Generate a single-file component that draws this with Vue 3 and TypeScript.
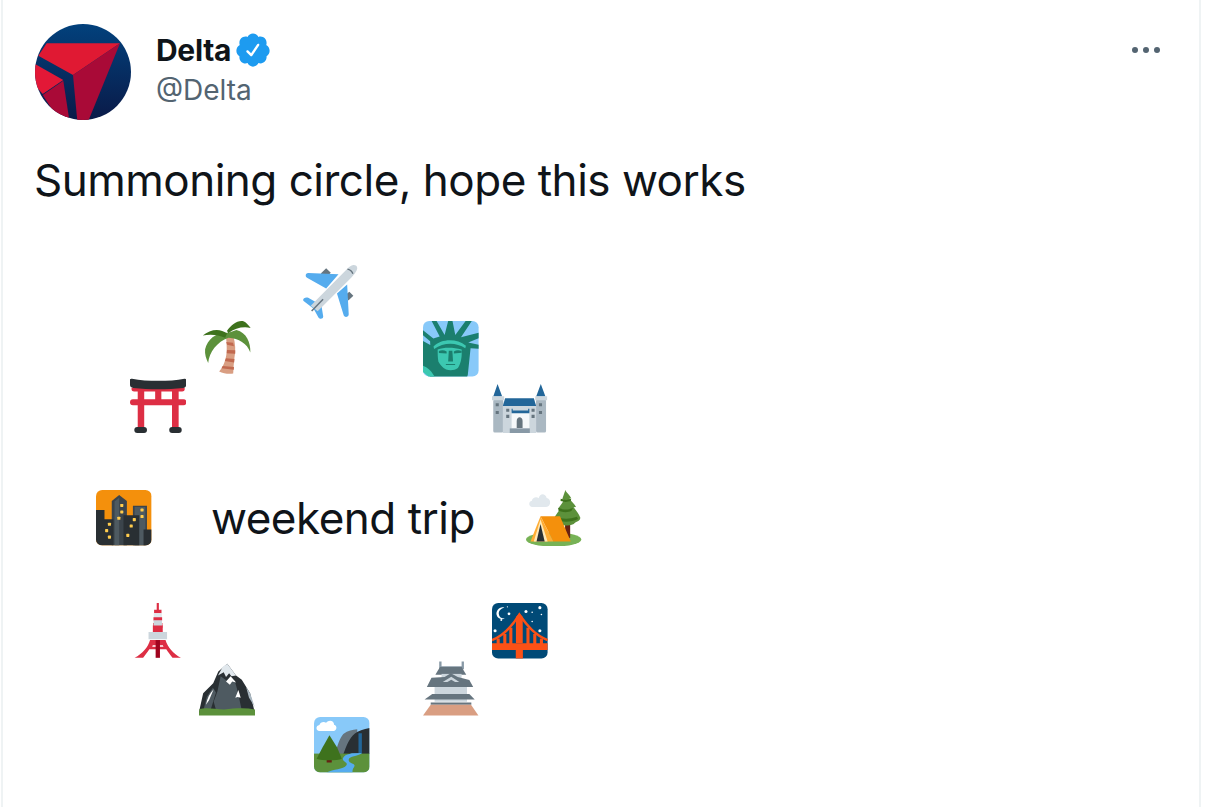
<script setup lang="ts">
const name: string = 'Delta'
const handle: string = '@Delta'
const windows: [number, number][] = [[16.7,10],[16.7,14.2],[14.8,18.3],[8.7,22.2],[6.9,26.3],[8.7,30.5],[24.8,19.2],[22.8,23.3],[20.6,29.4],[29.8,13],[29.8,17.2]]
const stars: [number, number, number][] = [[10,1.5,.4],[11,6,.9],[6,10,.6],[22,4.5,1],[26,5,.5],[31,2,1],[32,6.5,.5],[26,11,.5],[2,17,1],[31,17,1]]
</script>

<template>
  <main class="card">
    <header class="head">
      <svg class="avatar" viewBox="0 0 96 96">
        <defs>
          <linearGradient id="navy" x1="0" y1="0" x2="0" y2="1">
            <stop offset="0" stop-color="#02417c" />
            <stop offset="1" stop-color="#0a1a48" />
          </linearGradient>
          <clipPath id="round"><circle cx="48" cy="48" r="48" /></clipPath>
        </defs>
        <circle cx="48" cy="48" r="48" fill="url(#navy)" />
        <g clip-path="url(#round)">
          <polygon fill="#e01933" points="11.7,19.3 85,19.3 38,51 3.3,31.7" />
          <polygon fill="#a90a37" points="85,19.3 38,51 42.3,97 53.3,97" />
          <polygon fill="#e31837" points="-1,39.500 28.3,56 7.7,70 -1,60" />
          <polygon fill="#a90a37" points="28.3,56.7 34.300,96 24,96 7.7,71" />
        </g>
      </svg>
      <div class="who">
        <div class="name-row">
          <span class="name">{{ name }}</span>
          <svg class="badge" viewBox="0 0 24 24"><path fill="#1d9bf0" d="M22.5 12.5c0-1.58-.875-2.95-2.148-3.6.154-.435.238-.905.238-1.4 0-2.21-1.71-3.998-3.818-3.998-.47 0-.92.084-1.336.25C14.818 2.415 13.51 1.5 12 1.5s-2.816.917-3.437 2.25c-.415-.165-.866-.25-1.336-.25-2.11 0-3.818 1.79-3.818 4 0 .494.083.964.237 1.4-1.272.65-2.147 2.018-2.147 3.6 0 1.495.782 2.798 1.942 3.486-.02.17-.032.34-.032.514 0 2.21 1.708 4 3.818 4 .47 0 .92-.086 1.335-.25.62 1.334 1.926 2.25 3.437 2.25 1.512 0 2.818-.916 3.437-2.25.415.163.865.248 1.336.248 2.11 0 3.818-1.79 3.818-4 0-.174-.012-.344-.033-.513 1.158-.687 1.943-1.99 1.943-3.484zm-6.616-3.334l-4.334 6.5c-.145.217-.382.334-.625.334-.143 0-.288-.04-.416-.126l-.115-.094-2.415-2.415c-.293-.293-.293-.768 0-1.06s.768-.294 1.06 0l1.77 1.767 3.825-5.74c.23-.345.696-.436 1.04-.207.346.23.44.696.21 1.04z" /></svg>
        </div>
        <div class="handle">{{ handle }}</div>
      </div>
      <div class="more"><i></i><i></i><i></i></div>
    </header>

    <p class="tweet">Summoning circle, hope this works</p>

    <section class="stage">
      <!-- airplane -->
      <svg class="e plane" viewBox="0 0 36 36">
        <path fill="#66757f" d="M15 2.8l3 2.8-3 3-3.5-2.5zM30 18l2.6 2.6-3.2 3-2-3.5z" />
        <path fill="#55acee" d="M23 6.7L3.4 5.900C1.600 5.900 1.200 8 2.600 8.900L15 15.800zM28.600 13.200l1 19.200c.1 1.900-2.400 2.600-3.200 1L22 19.100zM11.900 26.700L3.400 21.800C1 21-.8 23 .6 24.200l6.300 4.700L10 34.600c1 1.500 3.600 1 3-1.200z" />
        <path fill="#ccd6dd" d="M32.500.6c2.400-.3 3.200 1.800 2.200 3.600-.8 1.500-1.900 3-3.200 4.300L9.500 30.600 5 27 27.600 4.200c1.500-1.500 3-3.300 4.900-3.600z" />
        <path fill="none" stroke="#66757f" stroke-width="1" d="M5.600 30.400L13 22.800" />
        <path fill="none" stroke="#66757f" stroke-width=".9" d="M28.800 3.300c1.700.4 3 1.500 3.500 3" />
      </svg>

      <!-- palm -->
      <svg class="e palm" viewBox="0 0 36 36">
        <path fill="#d99e82" d="M16.800 10h4.600c1.600 5 1.800 10 .9 14.500-.4 3.500-.7 6.700-.8 10.200-3 .4-6.500 0-9.100-1.400 2.500-2.800 4.300-7 4.800-12 .3-4-.1-8-.4-11.300z" />
        <path fill="#c1694f" d="M17 14.200l4.400.5.6 2.300-4.500-1zM17.500 19.400l5.300.2v2.200l-5.500-.2zM16.800 24.700l5.500.6-.2 2.200-6-1zM14.700 29.800l7.300.7-.1 1.700-8-1z" />
        <path fill="#5c913b" d="M18.500 8.300C11 7.500 5 12 3.300 19c-.3 3 .6 6 2 8.800C6 21 11 14 18.500 11.500 25 12 30.500 15 32.600 21c.3-6.500-2.500-13-9-14.600z" />
        <path fill="#3e721d" d="M17.500 8.800C13 5 6.500 6 1.800 10c5-.9 10-.5 14.500 1.500zM17.500 7C20 3 25-.5 28.500.9c1.500.7 3 2.500 4.300 4.200-5-1-10 0-14.500 3.500z" />
      </svg>

      <!-- statue of liberty -->
      <svg class="e statue" viewBox="0 0 36 36">
        <rect width="36" height="36" rx="4" fill="#88c9f9" />
        <path fill="#1b7f6e" d="M5.600 0h3.200l5.200 9L16.300 0h2.800l1.800 9L27.600 0h4l-7 10.600 11.400-3v3.600l-6.700 2.700 6.700 1.400v2.700l-5.200-.3-1.800 17.200-.4 1H4.500L0 29V13l4.700 2.500-.1-2.400L0 9.300V6l6.700 5.300 4.100-1.300z" />
        <path fill="#3cc8b1" d="M9.500 18.500c4-1.500 10-1.500 15.500 0 .3 4-.1 8.500-2.400 12-2.200 1.600-5.200 1.800-7.600.9-2.500-1.200-3.800-3-5-5-.5-2.500-.5-5.300-.5-7.900zM0 29c3 1 5 3 6.500 5.500l1 1.500H3.500L0 33z" />
        <path fill="#3cc8b1" d="M6.800 16.500c5.200-5.200 15-5.300 21-.5l-.4 1.700c-6-4-14-3.900-20.200.4z" />
        <path fill="#1b7f6e" d="M10.300 19.400c1.700-.6 3.400-.6 5 .4v1.200l-5-.2zM20 19.800c1.500-1 3.200-1 5-.4v1.200l-5 .4zM16.300 26.300h3.100v-1.100l-.4-6h-2.300zM14.800 27.800h6v.7h-6z" />
      </svg>

      <!-- torii -->
      <svg class="e torii" viewBox="0 0 36 36">
        <path fill="#dd2e44" d="M1 7h34.400v1.100c0 .8-.8 1.300-1.600 1.300H2.600c-.8 0-1.600-.5-1.600-1.300z" />
        <path fill="#dd2e44" d="M5 8h4.200v25H5zM27.200 8h4.300v25h-4.300zM16.300 9h4v6h-4z" />
        <rect x="0" y="14.400" width="36.500" height="3.900" rx="1.900" fill="#dd2e44" />
        <path fill="#292f33" d="M0 1.500C.3 1.100.9 1 1.300 1.200c5 1.100 11 1.300 17 1.300s12-.2 17-1.300c.4-.2.800 0 1 .4v3.600c0 1.100-.8 1.700-1.800 1.900-5 .6-11 .9-16.200.9-5.500 0-11-.3-16.200-.9C1 6.900 0 6.300 0 5.200z" />
        <rect x="2.800" y="32.400" width="8.200" height="3.800" rx="1.900" fill="#292f33" />
        <rect x="25.400" y="32.400" width="8.100" height="3.800" rx="1.900" fill="#292f33" />
      </svg>

      <!-- european castle -->
      <svg class="e castle" viewBox="0 0 36 36">
        <path fill="#226699" d="M3.600 4.500l3 8.200H.8zM31.600 4.500l3 8.200h-6z" />
        <rect x=".8" y="14.500" width="6.500" height="21.500" rx="1" fill="#aab8c2" />
        <rect x="28.500" y="14.500" width="6.500" height="21.500" rx="1" fill="#aab8c2" />
        <path fill="#ccd6dd" d="M7 18h21.600v18.400H7zM0 12.500h7.900v2.500H0zM28 12.500h7.700v2.500H28z" />
        <path fill="#226699" d="M8.500 13.800h18.600l1.500 5H7z" />
        <path fill="#f5f8fa" d="M12.700 22.600h11.500v10.700H12.700z" />
        <path fill="#226699" d="M12.700 20.500h.7v1.200h10v-1.200h.8v3H12.700z" />
        <path fill="#66757f" d="M16 33v-4.500c0-3.200 3.800-3.200 3.800 0V33z" />
        <path fill="#8899a6" d="M11.500 33.300h13V36.500h-13z" />
        <path fill="#66757f" d="M2.400 17h2v2h-2zM2.400 22h2v2h-2zM30.400 17h2v2h-2zM30.400 22h2v2h-2zM9.200 20.500h2v2h-2zM9.200 24.500h2v2h-2zM25.600 20.500h2v2h-2zM25.600 24.500h2v2h-2z" />
      </svg>

      <!-- city dusk -->
      <svg class="e city" viewBox="0 0 36 36">
        <defs><clipPath id="cityclip"><rect width="36" height="36" rx="4" /></clipPath></defs>
        <g clip-path="url(#cityclip)">
          <rect width="36" height="36" fill="#f4900c" />
          <path fill="#3b444b" d="M23.900 10.200h9.100V36h-9.100z" />
          <path fill="#4e5a61" d="M25 11h7v25h-7z" />
          <path fill="#3b444b" d="M10.200 7.200L15 3.300l5 3.900V36h-9.800z" />
          <path fill="#4e5a61" d="M12 7.500l3-2.500v31h-3z" />
          <path fill="#292f33" d="M0 13h5.500v6h5.800v17H0zM17.800 16.300H28V36H17.800zM30.800 25.500H36V36h-5.200z" />
          <rect v-for="(w, i) in windows" :key="i" :x="w[0] - 1" :y="w[1] - 1" width="2" height="2" rx=".4" fill="#ffcc4d" />
        </g>
      </svg>

      <span class="inner">weekend trip</span>

      <!-- camping -->
      <svg class="e tent" viewBox="0 0 36 36">
        <ellipse cx="17.900" cy="32" rx="17.900" ry="4.600" fill="#77b255" />
        <path fill="#e1e8ed" d="M4 11c-2.200 0-2.700-3.500-.2-4 .2-2.400 3.300-3 4.400-1.700C9 2 12.500 2 13.400 5.200c2.800 0 3.300 5.800-.4 5.800z" />
        <path fill="#662113" d="M25.300 20h3.300v11h-3.300z" />
        <path fill="#5c913b" d="M25.700.7c.8 1.200 2.800 3 3.600 4.700l-1.200.2c1.300 1.700 3.300 3.400 4.300 5.400l-1.600.2c1.400 1.800 3.200 3.700 4.400 6.800-.4 2.800-2.600 2-4.300 4-3.500 1.400-8 1.500-10.900-.4l-2-3c.9-2 2.400-4 4-6l-1.300-.3c1.200-2 3-3.600 3.800-6h-1.100c.6-2 1.300-3.800 2.200-6.600z" />
        <path fill="#3e721d" d="M21 11.500c3 1.500 6.500 1.600 9.500 0l-1 2c-2.500 1.300-5.400 1.200-8.500 0zM19 17c3.500 2 9 2.200 14 .4l.7 1.400c-5 2.400-11 2.300-15.700-.2zM22.500 5.700c2.300 1 4.700 1 6.800 0l-.4 1.500c-2.200.7-4.400.7-6.500 0z" />
        <path fill="#f4900c" d="M9.400 17H22l7 16.300H17.700z" />
        <path fill="#ffac33" d="M9.400 17l8.300 16.300H2.900z" />
        <path fill="#ffe8b6" d="M9.400 19l4.600 14.300H5z" />
        <path fill="#292f33" d="M9.400 22l2.700 11.300H6.800z" />
      </svg>

      <!-- tokyo tower -->
      <svg class="e tower" viewBox="0 0 36 36">
        <path fill="#dd2e44" d="M17.300 0h1.400v4.400h1.700v2.200h-4.800V4.400h1.700z" />
        <path fill="#e1e8ed" d="M15.400 6.600h5.200v12.100h-5.200z" />
        <path fill="#dd2e44" d="M15.200 9.200h5.600v2.100h-5.600zM15 13h6v3h-6z" />
        <path fill="#dd2e44" d="M14.800 14.500h6.400v4.300h-6.400z" />
        <path fill="#ccd6dd" d="M15.300 11.300h5.400V14.500h-5.400zM12 18.800h12v4.700H12z" />
        <path fill="#dd2e44" d="M13 24h10c1.400 4.600 5 9 10 11.500h-5.500c-1.500-2-3-3.800-4-5.500h-11c-1 1.700-2.500 3.500-4 5.500H3c5-2.500 8.800-7 10-11.500zm1.700 3.300c0 .4-.2.800-.4 1h7.400c-.2-.3-.3-.7-.4-1z" fill-rule="evenodd" />
        <path fill="#a0041e" d="M16.600 24h2.800v11.500h-2.800z" />
      </svg>

      <!-- bridge at night -->
      <svg class="e bridge" viewBox="0 0 36 36">
        <rect width="36" height="36" rx="4" fill="#004a77" />
        <path fill="#fff" d="M8 3c-3-1-5.700 2-5 4.800.5 2 3 3.400 5.300 2.300-2.300 0-3.700-1.100-3.900-3C4.200 5 5.800 3.400 8 3z" />
        <circle v-for="(s, i) in stars" :key="i" :cx="s[0]" :cy="s[1] * 1 + 1" :r="s[2]" fill="#fff" />
        <path fill="#fc5116" d="M15.500 9l2.200-2.400L19.900 9v17h-4.400z" />
        <path fill="none" stroke="#fc5116" stroke-width="1.600" d="M0 24C8 21 13 15 17.700 7.500 23 15 28 21 36 24" />
        <path fill="#fc5116" d="M0 26h36v4.500H20v5.500h-4.600v-5.500H0zM3 23h2v4H3zM7.300 20h2v7h-2zM11.200 16h2v11h-2zM22.300 16h2v11h-2zM26.700 20h2v7h-2zM31 23h2v4h-2z" />
      </svg>

      <!-- mountain -->
      <svg class="e mountain" viewBox="0 0 36 36">
        <path fill="#292f33" d="M18.300 2.400L24 10l3.700 2.800 5.400 8.700 3.200 13.100H-.2L2.700 21.500 9.200 15l3.300-7.500z" />
        <path fill="#aab8c2" d="M30.500 17.500l2.600 4 3 9-3.700-6z" />
        <path fill="#4e5a61" d="M14 10.500l4 3 5-.5 2 7 3 14H11.500l-2-7 2.500-7z" />
        <path fill="#4e5a61" d="M9 18l2 3-4 13H2.500L5 24z" />
        <path fill="#e1e8ed" d="M18.300 2.400L24 10l-3 .5-1.500-2-2 2.500-1.500-3-3.700 2 3-5.500z" />
        <path fill="#fff" d="M17.500 14l3-3.500 3.500 4-2.500-.5-1.500 2zM25.500 19.500l1.500 5-2-.5-1.500.5zM9.500 19L6.500 26l-2 3c.8-4 2.500-7.500 5-10z" />
        <path fill="#5c913b" d="M-.2 36l.5-4.300c5.300-1 10.500.3 16 .3 6-.5 13-1.300 20 0V36z" />
      </svg>

      <!-- japanese castle -->
      <svg class="e jcastle" viewBox="0 0 36 36">
        <path fill="#8899a6" d="M10.500 1h1.500v3h13v-3h1.500v5h-16z" />
        <path fill="#66757f" d="M11 4.500h14l3 5H8z" />
        <path fill="#ccd6dd" d="M12 9h13v4H12z" />
        <path fill="#ccd6dd" d="M7.500 14h21v13H7.500z" />
        <path fill="#66757f" d="M14 11l4-2.500 4.500 2.500 7.500 2 2.500 4.500H2.500l3-6z" />
        <path fill="#ccd6dd" d="M18.300 10.800l5.200 3.500H12.800z" />
        <path fill="#66757f" d="M18.300 12.800l2.500 1.500h-5z" />
        <path fill="#66757f" d="M6 22h24l3.500 3.500H1z" />
        <path fill="#66757f" d="M5 27.500h26.300V29H5z" />
        <path fill="#d99e82" d="M5 29h26.100l4.800 7H0z" />
      </svg>

      <!-- national park -->
      <svg class="e park" viewBox="0 0 36 36">
        <defs><clipPath id="parkclip"><rect width="36" height="36" rx="4" /></clipPath></defs>
        <g clip-path="url(#parkclip)">
          <rect width="36" height="36" fill="#88c9f9" />
          <path fill="#fff" d="M3.500 9c-2.500 0-2.500-3.500 0-3.800C4 3.300 6.500 2.500 7.800 3.800 9.500 1.500 13 2.200 13 5c2.200.3 2 4-.4 4z" />
          <path fill="#66757f" d="M13.600 24c1.500-5 3-10.500 5.400-13 3-2.300 6-2.800 9-3.100v16.100z" />
          <path fill="#292f33" d="M19 24c2-5 3.500-10 7.500-13.300C28.500 9 32 8 36 7.200V24z" />
          <path fill="#226699" d="M28.800 10.500H31V24h-2.200z" />
          <rect y="23.700" width="36" height="12.300" fill="#5c913b" />
          <path fill="#55acee" d="M24.500 23.500l6.500-.2c-2.800 2.300-8 1.800-8.500 4.200-.5 3.200 5 2 3.500 4.800-1.500 2-1 3.700-1 3.700H8c4.500-2.500 11-1.900 13-4.800 1.500-2.300-4.500-2.400-1.500-5.700 1-1.200 3-1.100 5-2z" />
          <path fill="#662113" d="M8.200 27h3.300v2.500H8.200z" />
          <path fill="#3e721d" d="M10 11.800l5 8 3 7.200c-3 1.300-13 1.300-16.300 0l3.800-7.200z" />
        </g>
      </svg>
    </section>
  </main>
</template>

<style scoped>
.card {
  box-sizing: border-box;
  width: 1200px;
  height: 807px;
  margin-left: 1px;
  padding: 24px 32px 0;
  border-left: 2px solid #eff3f4;
  border-right: 2px solid #eff3f4;
  background: #fff;
  color: #0f1419;
  font-family: Inter, "Liberation Sans", sans-serif;
  overflow: hidden;
}
.head {
  display: flex;
  align-items: flex-start;
  gap: 25px;
}
.avatar {
  width: 96px;
  height: 96px;
  flex: none;
}
.who {
  flex: 1;
  padding-top: 7px;
}
.name-row {
  display: flex;
  align-items: center;
  height: 38px;
}
.name {
  font-size: 30px;
  font-weight: 700;
  letter-spacing: -0.3px;
}
.badge {
  width: 38px;
  height: 38px;
  margin-left: 3px;
}
.handle {
  font-size: 28px;
  line-height: 42px;
  color: #536471;
  letter-spacing: 0;
}
.more {
  display: flex;
  gap: 5px;
  margin: 23px 7px 0 0;
}
.more i {
  width: 6px;
  height: 6px;
  border-radius: 50%;
  background: #536471;
}
.tweet {
  margin: 31px 0 0 -1px;
  font-size: 44px;
  line-height: 58px;
  letter-spacing: -0.5px;
}
.stage {
  position: relative;
  margin-top: 31px;
  height: 560px;
}
.e {
  position: absolute;
  width: 55.6px;
  height: 55.6px;
}
.plane { left: 268px; top: 24px; }
.palm { left: 165px; top: 80px; }
.statue { left: 388px; top: 81px; }
.torii { left: 95px; top: 137px; }
.castle { left: 457px; top: 137px; }
.city { left: 61px; top: 250px; }
.tent { left: 491px; top: 250px; }
.tower { left: 95px; top: 363px; }
.bridge { left: 457px; top: 363px; }
.mountain { left: 164px; top: 420px; }
.jcastle { left: 388px; top: 420px; }
.park { left: 279px; top: 477px; }
.inner {
  position: absolute;
  left: 176px;
  top: 249px;
  font-size: 44px;
  line-height: 58px;
  letter-spacing: -0.5px;
  white-space: nowrap;
}
</style>
